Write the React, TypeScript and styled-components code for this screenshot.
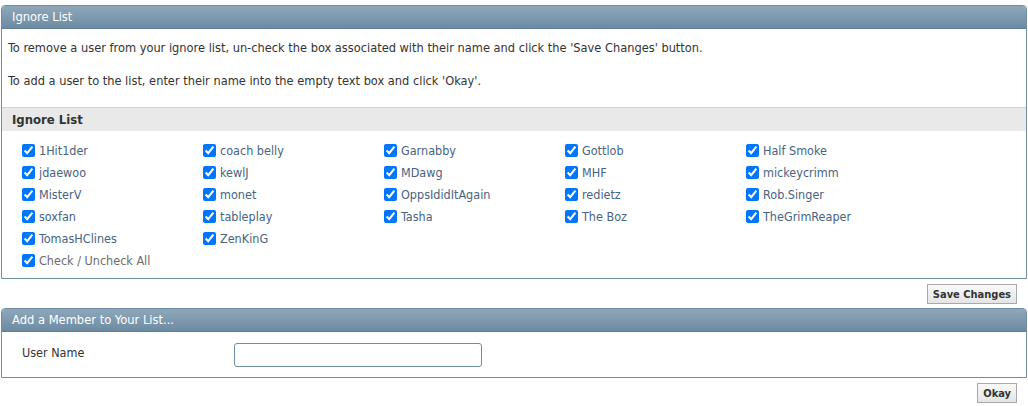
import React from 'react';
import styled, { createGlobalStyle } from 'styled-components';

const GlobalStyle = createGlobalStyle`
body {
	margin: 0;
	background: #fff;
	font-family: "DejaVu Sans Condensed", "DejaVu Sans", sans-serif;
	font-size: 12px;
	color: #333;
}
`;

const Page = styled.div`
padding: 5px 1px 0 1px;
display: flex;
flex-direction: column;
`;

const Panel = styled.div`
border: 1px solid #6f8ea6;
border-radius: 4px 4px 0 0;
background: #fff;
`;

const PanelHead = styled.div`
height: 22px;
line-height: 22px;
padding: 0 10px;
color: #fff;
font-size: 12.8px;
background: linear-gradient(to bottom, #8ea8ba, #6c8ba3);
border-radius: 3px 3px 0 0;
border-bottom: 1px solid #5f7f97;
`;

const Intro = styled.p`
margin: 0;
padding: ${(p: { $top: number }) => p.$top}px 8px 0 6px;
line-height: 16px;
font-size: 12.7px;
color: #333;
`;

const SubHead = styled.div`
margin-top: 18px;
height: 23px;
line-height: 23px;
padding: 0 10px;
background: #e9e9e9;
border-top: 1px solid #d2d2d2;
font-weight: bold;
font-size: 13px;
color: #333;
`;

const Names = styled.div`
display: grid;
grid-template-columns: repeat(5, 181px);
grid-auto-rows: 22px;
padding: 8px 0 7px 20px;
`;

const Item = styled.label`
display: flex;
align-items: center;
gap: 4px;
font-size: 12.5px;
color: ${(p: { $muted?: boolean }) => (p.$muted ? '#6b6b6b' : '#476482')};
white-space: nowrap;
input {
	margin: 0;
	width: 13px;
	height: 13px;
}
`;

const ButtonRow = styled.div`
display: flex;
justify-content: flex-end;
padding: 5px 10px 4px 0;
`;

const Button = styled.button`
font-family: "DejaVu Sans Condensed", "DejaVu Sans", sans-serif;
font-weight: bold;
font-size: 11px;
color: #333;
background: linear-gradient(to bottom, #fafafa, #e4e4e4);
border: 1px solid #a9a9a9;
height: 20px;
padding: 0 5px;
cursor: pointer;
`;

const FormRow = styled.div`
display: flex;
align-items: flex-start;
padding: 11px 0 10px 20px;
height: 24px;
`;

const FieldLabel = styled.div`
width: 212px;
padding-top: 2px;
font-size: 12.5px;
color: #333;
`;

const TextBox = styled.input`
width: 240px;
height: 20px;
border: 1px solid #6f8ea6;
border-radius: 3px;
padding: 1px 3px;
outline: none;
`;

const users = [
	'1Hit1der', 'coach belly', 'Garnabby', 'Gottlob', 'Half Smoke',
	'jdaewoo', 'kewlJ', 'MDawg', 'MHF', 'mickeycrimm',
	'MisterV', 'monet', 'OppsIdidItAgain', 'redietz', 'Rob.Singer',
	'soxfan', 'tableplay', 'Tasha', 'The Boz', 'TheGrimReaper',
	'TomasHClines', 'ZenKinG',
];

export default function App() {
	const [checked, setChecked] = React.useState<boolean[]>(users.map(() => true));
	const all = checked.every(Boolean);

	return <Page>
		<GlobalStyle />
		<Panel>
			<PanelHead>Ignore List</PanelHead>
			<Intro $top={11}>To remove a user from your ignore list, un-check the box associated with their name and click the 'Save Changes' button.</Intro>
			<Intro $top={17}>To add a user to the list, enter their name into the empty text box and click 'Okay'.</Intro>
			<SubHead>Ignore List</SubHead>
			<Names>
				{users.map((u, i) =>
					<Item key={u}>
						<input type="checkbox" checked={checked[i]}
							onChange={() => setChecked(checked.map((c, j) => j === i ? !c : c))} />
						{u}
					</Item>)}
				<Item $muted style={{ gridColumn: '1 / span 2' }}>
					<input type="checkbox" checked={all}
						onChange={() => setChecked(users.map(() => !all))} />
					Check / Uncheck All
				</Item>
			</Names>
		</Panel>
		<ButtonRow><Button>Save Changes</Button></ButtonRow>
		<Panel>
			<PanelHead>Add a Member to Your List...</PanelHead>
			<FormRow>
				<FieldLabel>User Name</FieldLabel>
				<TextBox type="text" />
			</FormRow>
		</Panel>
		<ButtonRow><Button>Okay</Button></ButtonRow>
	</Page>;
}
